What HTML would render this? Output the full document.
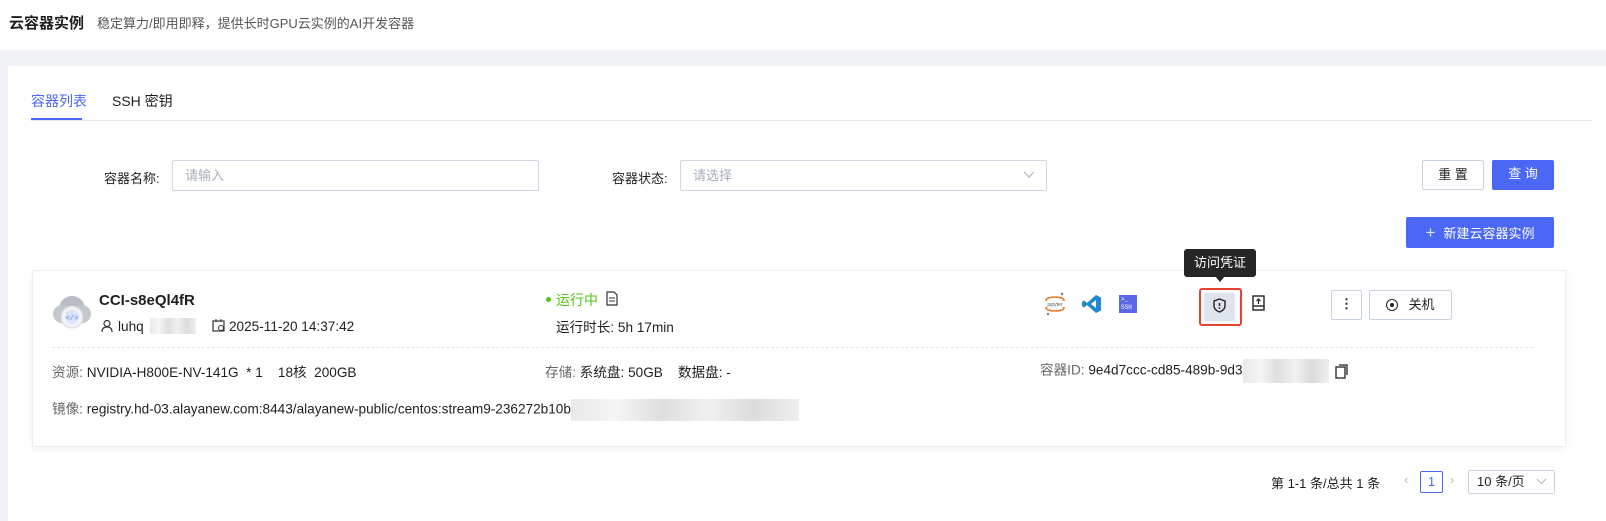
<!DOCTYPE html>
<html><head><meta charset="utf-8"><style>
*{box-sizing:border-box;margin:0;padding:0}
body{width:1606px;height:521px;overflow:hidden;background:#f0f2f5;font-family:"Liberation Sans","Noto Sans CJK SC",sans-serif;color:#1f1f1f;font-size:13px;position:relative}
.a{position:absolute;white-space:nowrap}
.hdr{left:0;top:0;width:1606px;height:50px;background:#fff}
.main{left:8px;top:66px;width:1598px;height:455px;background:#fff}
.inp{border:1px solid #d0d7e2;border-radius:2px;height:31px;color:#a8afba;padding:0 12px;line-height:29px}
.btn{border-radius:2px;height:30px;line-height:28px;text-align:center;font-size:13px}
.mos{background:linear-gradient(90deg,#e9e9e9,#f5f5f5 20%,#dedede 40%,#f1f1f1 60%,#dcdcdc 80%,#efefef)}
.lbl{color:#666}
.row{font-size:13.6px}
.im{display:inline-block;vertical-align:middle}
</style></head><body>
<div class="a hdr"></div>
<div class="a" style="left:9px;top:12px;font-size:15px;font-weight:bold">云容器实例</div>
<div class="a" style="left:97px;top:13px;font-size:13px;color:#555">稳定算力/即用即释，提供长时GPU云实例的AI开发容器</div>
<div class="a main"></div>
<div class="a" style="left:31px;top:91px;font-size:14px;color:#4a67f5">容器列表</div>
<div class="a" style="left:112px;top:91px;font-size:14px">SSH 密钥</div>
<div class="a" style="left:31px;top:120px;width:1561px;height:1px;background:#e3e6eb"></div>
<div class="a" style="left:31px;top:118px;width:51px;height:2px;background:#4a67f5"></div>

<div class="a" style="left:104px;top:168px;font-size:13px">容器名称:</div>
<div class="a inp" style="left:172px;top:160px;width:367px">请输入</div>
<div class="a" style="left:612px;top:168px;font-size:13px">容器状态:</div>
<div class="a inp" style="left:680px;top:160px;width:367px">请选择</div>
<svg class="a" style="left:1023px;top:170px" width="12" height="10"><path d="M1 2l5 5 5-5" fill="none" stroke="#b0b6c0" stroke-width="1.2"/></svg>
<div class="a btn" style="left:1422px;top:160px;width:62px;border:1px solid #c9d3df">重 置</div>
<div class="a btn" style="left:1492px;top:160px;width:62px;background:#4a67f5;color:#fff">查 询</div>
<div class="a btn" style="left:1406px;top:217px;width:148px;background:#4a67f5;color:#fff;height:31px;line-height:31px"><span style="font-size:17px;margin-right:8px;color:#dfe5ff">+</span>新建云容器实例</div>

<div class="a" style="left:32px;top:270px;width:1534px;height:177px;background:#fff;border:1px solid #eceef2;box-shadow:0 2px 6px rgba(0,0,0,.06)"></div>
<svg class="a" style="left:51px;top:292px" width="42" height="42" viewBox="0 0 42 42"><circle cx="21" cy="17" r="13" fill="#b8bcc4"/><circle cx="11" cy="22" r="9" fill="#c4c8cf"/><circle cx="31" cy="22" r="9" fill="#c4c8cf"/><circle cx="21" cy="25" r="11" fill="#f2f3f6" stroke="#d4d7dd"/><circle cx="21" cy="25" r="7" fill="#dce4fb"/><text x="21" y="28" font-size="7" text-anchor="middle" fill="#5b7be8" font-family="Liberation Mono">&lt;/&gt;</text></svg>
<div class="a" style="left:99px;top:292px;font-size:15px;font-weight:bold">CCI-s8eQl4fR</div>
<svg class="a" style="left:101px;top:319px" width="12" height="14"><circle cx="6" cy="4.5" r="3" fill="none" stroke="#333" stroke-width="1.2"/><path d="M1 13c0-4 2.5-5 5-5s5 1 5 5" fill="none" stroke="#333" stroke-width="1.2"/></svg>
<div class="a row" style="left:118px;top:319px">luhq</div>
<div class="a mos" style="left:150px;top:318px;width:46px;height:16px"></div>
<svg class="a" style="left:212px;top:319px" width="13" height="13"><rect x="1" y="2" width="11" height="10" fill="none" stroke="#333" stroke-width="1.2"/><path d="M4 0v3M9 0v3" stroke="#333"/><circle cx="9" cy="9" r="2.5" fill="#fff" stroke="#333"/></svg>
<div class="a row" style="left:229px;top:319px">2025-11-20 14:37:42</div>

<div class="a" style="left:546px;top:297px;width:5px;height:5px;border-radius:50%;background:#52c41a"></div>
<div class="a" style="left:556px;top:290px;color:#52c41a;font-size:14px">运行中</div>
<svg class="a" style="left:606px;top:291px" width="12" height="15"><path d="M1 1h7l3 3v10H1z" fill="none" stroke="#333" stroke-width="1.2"/><path d="M3 7h6M3 10h6" stroke="#333"/></svg>
<div class="a row" style="left:556px;top:316px">运行时长: 5h 17min</div>

<svg class="a" style="left:1044px;top:292px" width="22" height="24"><ellipse cx="11" cy="8" rx="9" ry="3" fill="none" stroke="#f37726" stroke-width="1.6"/><ellipse cx="11" cy="16" rx="9" ry="3" fill="none" stroke="#f37726" stroke-width="1.6"/><rect x="2" y="9" width="18" height="6" fill="#fff"/><text x="11" y="14" font-size="5" text-anchor="middle" fill="#555">jupyter</text><circle cx="18" cy="2" r="1.2" fill="#777"/><circle cx="4" cy="22" r="1.2" fill="#777"/></svg>
<svg class="a" style="left:1082px;top:294px" width="20" height="20" viewBox="0 0 20 20"><path d="M14 1l5 2.5v13L14 19 5 11l-3 2.5L0 12V8l2-1.5L5 9l9-8zM14 6l-5 4 5 4z" fill="#1f8ad2"/></svg>
<div class="a" style="left:1119px;top:295px;width:18px;height:18px;background:#5b67e8;color:#fff;font-size:6px;line-height:8px;padding:1px 2px;font-family:'Liberation Mono'">&gt;_<br>SSH</div>
<div class="a" style="left:1184px;top:249px;width:72px;height:28px;background:#262626;border-radius:3px;color:#fff;font-size:13px;line-height:28px;text-align:center">访问凭证</div>
<div class="a" style="left:1215px;top:276px;width:0;height:0;border-left:5px solid transparent;border-right:5px solid transparent;border-top:6px solid #262626"></div>
<div class="a" style="left:1199px;top:288px;width:43px;height:38px;border:2px solid #e8412f;border-radius:3px"></div>
<div class="a" style="left:1204px;top:293px;width:31px;height:28px;background:#dfe3ec;border-radius:2px"></div>
<svg class="a" style="left:1213px;top:298px" width="13" height="15"><path d="M6.5 1L12 3v5c0 3-3 5-5.5 6C4 13 1 11 1 8V3z" fill="none" stroke="#222" stroke-width="1.4"/><path d="M6.5 5v3" stroke="#222" stroke-width="1.5"/><circle cx="6.5" cy="10" r=".9" fill="#222"/></svg>
<svg class="a" style="left:1252px;top:295px" width="13" height="16"><rect x="1" y="1" width="11" height="14" fill="none" stroke="#222" stroke-width="1.4"/><path d="M6.5 9V4M4.5 6l2-2 2 2" fill="none" stroke="#222" stroke-width="1.2"/><path d="M1 11h11" stroke="#222" stroke-width="1.4"/></svg>
<div class="a btn" style="left:1331px;top:290px;width:31px;border:1px solid #c9d3df;font-weight:bold;line-height:26px">⋮</div>
<div class="a btn" style="left:1369px;top:290px;width:83px;border:1px solid #c9d3df"><span style="display:inline-block;width:12px;height:12px;border:1.5px solid #222;border-radius:50%;vertical-align:-2px;position:relative;margin-right:10px"><span style="position:absolute;left:2.5px;top:2.5px;width:4px;height:4px;background:#222;border-radius:50%"></span></span>关机</div>

<div class="a" style="left:52px;top:347px;width:1481px;border-top:1px dashed #e3e6eb"></div>
<div class="a row" style="left:52px;top:361px"><span class="lbl">资源: </span>NVIDIA-H800E-NV-141G &nbsp;* 1 &nbsp;&nbsp; 18核 &nbsp;200GB</div>
<div class="a row" style="left:545px;top:361px"><span class="lbl">存储: </span>系统盘: 50GB &nbsp;&nbsp; 数据盘: -</div>
<div class="a row" style="left:1040px;top:359px;line-height:20px"><span class="lbl">容器ID: </span>9e4d7ccc-cd85-489b-9d3<span class="mos im" style="width:86px;height:24px"></span><svg class="im" style="margin-left:6px" width="14" height="15"><rect x="1" y="3" width="9" height="11" fill="none" stroke="#222" stroke-width="1.3"/><path d="M4 1h8v10" fill="none" stroke="#222" stroke-width="1.3"/></svg></div>
<div class="a row" style="left:52px;top:399px;line-height:20px"><span class="lbl">镜像: </span>registry.hd-03.alayanew.com:8443/alayanew-public/centos:stream9-236272b10b<span class="mos im" style="width:228px;height:22px"></span></div>

<div class="a" style="left:1271px;top:473px">第 1-1 条/总共 1 条</div>
<div class="a" style="left:1404px;top:472px;color:#bbb">‹</div>
<div class="a" style="left:1420px;top:471px;width:23px;height:22px;border:1px solid #4a67f5;border-radius:2px;color:#4a67f5;text-align:center;line-height:20px">1</div>
<div class="a" style="left:1450px;top:472px;color:#bbb">›</div>
<div class="a" style="left:1468px;top:470px;width:87px;height:24px;border:1px solid #c9d3df;border-radius:2px;padding-left:8px;line-height:22px">10 条/页</div>
<svg class="a" style="left:1536px;top:478px" width="11" height="8"><path d="M1 1l4.5 4.5L10 1" fill="none" stroke="#b0b6c0"/></svg>
</body></html>
